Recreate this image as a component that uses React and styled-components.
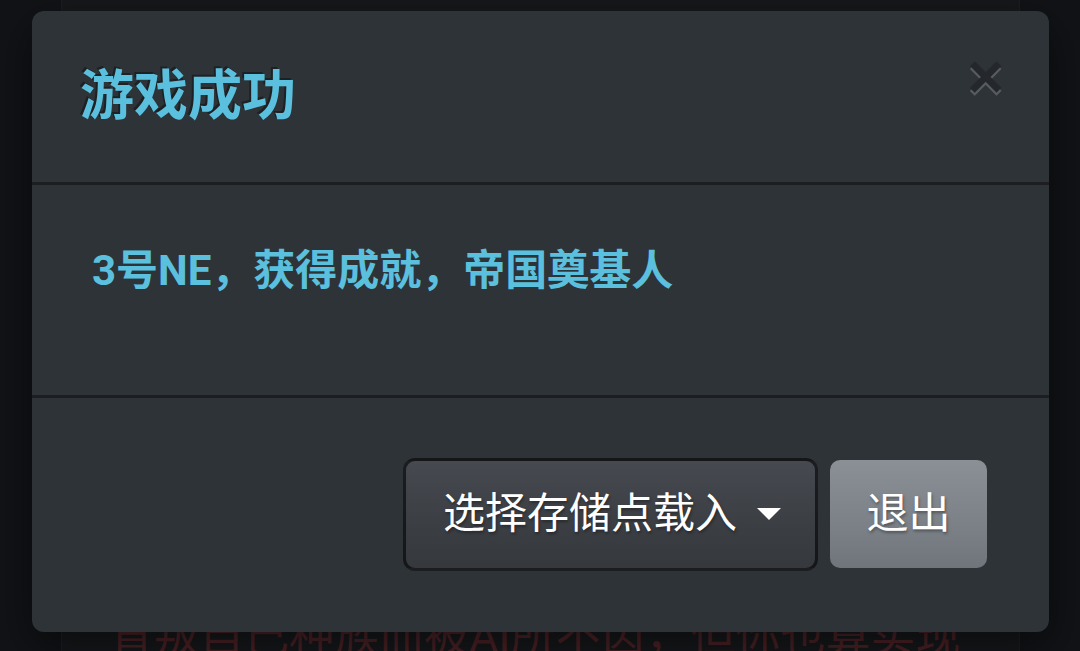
import React from "react";
import styled, { createGlobalStyle } from "styled-components";

const GlobalStyle = createGlobalStyle`
  html, body {
    margin: 0;
    padding: 0;
    background: #111316;
  }
  * { box-sizing: border-box; }
  body {
    font-family: Roboto, "Noto Sans CJK SC", "Noto Sans", sans-serif;
  }
`;

const Page = styled.div`
  position: relative;
  width: 1080px;
  height: 651px;
  overflow: hidden;
  display: flex;
  padding-left: 61px;
  background: #111316;
`;

const Panel = styled.div`
  width: 959px;
  height: 100%;
  background: #16181b;
  border-left: 1px solid #1c1e22;
  border-right: 1px solid #1c1e22;
  padding: 606px 0 0 47px;
`;

const StoryLine = styled.p`
  margin: 0;
  font-size: 45px;
  line-height: 62px;
  color: #4c2226;
  white-space: nowrap;
`;

const Dialog = styled.div`
  position: absolute;
  left: 32px;
  top: 11px;
  width: 1017px;
  height: 621px;
  display: flex;
  flex-direction: column;
  background: #2e3338;
  border-radius: 12px;
  box-shadow: 0 15px 45px rgba(0, 0, 0, 0.5);
  overflow: hidden;
`;

const Header = styled.div`
  height: 174px;
  flex: none;
  display: flex;
  align-items: center;
  justify-content: space-between;
  padding: 0 45px 0 48px;
  border-bottom: 3px solid #1c1e22;
`;

const Title = styled.h4`
  margin: 0;
  font-size: 54px;
  line-height: 1.1;
  font-weight: 700;
  color: #5bc0de;
  text-shadow: -2px -2px 0 rgba(0, 0, 0, 0.35);
`;

const Close = styled.button`
  border: 0;
  padding: 0;
  margin-top: -40px;
  background: transparent;
  font-family: "Liberation Sans", Arial, sans-serif;
  font-size: 63px;
  font-weight: 700;
  line-height: 1;
  color: #000;
  text-shadow: 0 3px 0 #fff;
  opacity: 0.2;
  cursor: pointer;
`;

const Body = styled.div`
  height: 213px;
  flex: none;
  padding: 56px 60px 0;
  border-bottom: 3px solid #1c1e22;
`;

const Message = styled.p`
  margin: 0;
  font-size: 42px;
  line-height: 60px;
  font-weight: 700;
  color: #5bc0de;
`;

const Footer = styled.div`
  flex: 1;
  display: flex;
  align-items: center;
  justify-content: flex-end;
  padding: 0 62px 2px 0;
  gap: 12px;
`;

const DropButton = styled.button`
  height: 113px;
  display: flex;
  align-items: center;
  padding: 0 34px 0 37px;
  border: 3px solid rgba(0, 0, 0, 0.6);
  border-radius: 12px;
  background: linear-gradient(#46494f, #3b3e43 60%, #35383c);
  color: #fff;
  font-family: inherit;
  font-size: 42px;
  line-height: 1;
  text-shadow: 1px 2px 3px rgba(0, 0, 0, 0.35);
  cursor: pointer;
`;

const Caret = styled.span`
  display: inline-block;
  width: 0;
  height: 0;
  margin-left: 20px;
  border-top: 12px solid #fff;
  border-left: 12px solid transparent;
  border-right: 12px solid transparent;
`;

const ExitButton = styled.button`
  width: 157px;
  height: 108px;
  border: 0;
  border-radius: 10px;
  background: linear-gradient(#8b9096, #7b8187 60%, #6f757b);
  color: #fff;
  font-family: inherit;
  font-size: 42px;
  line-height: 1;
  text-shadow: 1px 2px 3px rgba(0, 0, 0, 0.35);
  cursor: pointer;
`;

export default function App() {
  return (
    <>
      <GlobalStyle />
      <Page>
        <Panel>
          <StoryLine>背叛自己种族而被AI所不齿，但你也算实现</StoryLine>
        </Panel>
        <Dialog role="dialog">
          <Header>
            <Title>游戏成功</Title>
            <Close aria-label="关闭">×</Close>
          </Header>
          <Body>
            <Message>3号NE，获得成就，帝国奠基人</Message>
          </Body>
          <Footer>
            <DropButton>
              选择存储点载入
              <Caret />
            </DropButton>
            <ExitButton>退出</ExitButton>
          </Footer>
        </Dialog>
      </Page>
    </>
  );
}
